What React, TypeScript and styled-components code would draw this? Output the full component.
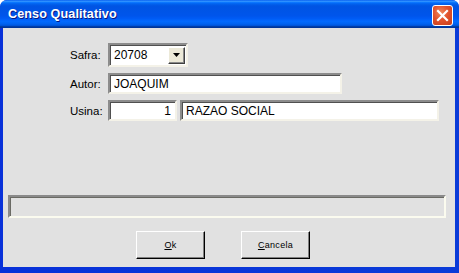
import React from 'react';
import styled, { createGlobalStyle } from 'styled-components';

const GlobalStyle = createGlobalStyle`
  html, body {
    margin: 0;
    padding: 0;
    background: #ffffff;
  }
  body {
    font-family: "Liberation Sans", Arial, sans-serif;
  }
`;

const Window = styled.div`
  width: 459px;
  height: 273px;
  display: flex;
  flex-direction: column;
  background: #0831d9;
  border-radius: 7px 7px 0 0;
  overflow: hidden;
`;

const TitleBar = styled.div`
  height: 28px;
  flex: none;
  display: flex;
  align-items: center;
  justify-content: space-between;
  padding: 0 6px 0 8px;
  background: linear-gradient(
    to bottom,
    #0058ee 0%,
    #3593ff 4%,
    #288eff 6%,
    #127dff 8%,
    #036ffc 10%,
    #0262ee 14%,
    #0057e5 20%,
    #0054e3 24%,
    #0055eb 56%,
    #005bf5 66%,
    #026afe 76%,
    #0062ef 86%,
    #0052d6 92%,
    #0040ab 94%,
    #003092 100%
  );
`;

const Title = styled.span`
  color: #ffffff;
  font-weight: bold;
  font-size: 12.6px;
  letter-spacing: 0.1px;
  text-shadow: 1px 1px #0a1883;
`;

const CloseButton = styled.div`
  width: 19px;
  height: 19px;
  margin-top: 3px;
  border: 1px solid #ffffff;
  border-radius: 3px;
  background: radial-gradient(circle at 40% 35%, #f08a5d 0%, #e2532d 45%, #c63c1a 100%);
  display: flex;
  align-items: center;
  justify-content: center;
`;

const Frame = styled.div`
  flex: 1;
  display: flex;
  padding: 0 4px 6px 3px;
  background: linear-gradient(to right, #0831d9 0%, #0a3bd8 100%);
`;

const Client = styled.div`
  flex: 1;
  display: flex;
  flex-direction: column;
  background: #e1e1e1;
  padding-top: 15px;
`;

const Form = styled.div`
  display: grid;
  grid-template-columns: 38px auto;
  row-gap: 6px;
  padding-left: 67px;
  align-items: center;
`;

const Label = styled.span`
  font-size: 11.5px;
  color: #000000;
`;

const Fields = styled.div`
  display: flex;
  gap: 3px;
`;

const Sunken = styled.div<{ w: number; h?: number; align?: string }>`
  box-sizing: border-box;
  width: ${p => p.w}px;
  height: ${p => p.h ?? 21}px;
  background: #ffffff;
  border-style: solid;
  border-width: 2px;
  border-color: #8c8c8c #f4f2e8 #f4f2e8 #8c8c8c;
  box-shadow: inset 1px 1px 0 #505050;
  display: flex;
  align-items: center;
  justify-content: ${p => (p.align === 'right' ? 'flex-end' : 'flex-start')};
  padding: 0 4px 0 4px;
  font-size: 12px;
  color: #000000;
`;

const Combo = styled(Sunken)`
  padding-right: 1px;
  justify-content: space-between;
`;

const DropButton = styled.div`
  box-sizing: border-box;
  width: 17px;
  height: 17px;
  background: #ece9d8;
  border-style: solid;
  border-width: 1px;
  border-color: #ffffff #404040 #404040 #ffffff;
  box-shadow: inset -1px -1px 0 #8a8a8a;
  display: flex;
  align-items: center;
  justify-content: center;
`;

const Spacer = styled.div`
  flex: 1;
`;

const StatusPanel = styled.div`
  box-sizing: border-box;
  height: 23px;
  margin: 0 9px 0 5px;
  border-style: solid;
  border-width: 2px;
  border-color: #8a8a8a #fbfbef #fbfbef #8a8a8a;
  box-shadow: inset 1px 1px 0 #6a6a64;
`;

const ButtonRow = styled.div`
  display: flex;
  gap: 36px;
  padding: 13px 0 8px 133px;
`;

const Button = styled.div`
  box-sizing: border-box;
  width: 69px;
  height: 28px;
  background: #e1e1e1;
  border-style: solid;
  border-width: 1px;
  border-color: #ffffff #000000 #000000 #ffffff;
  box-shadow: inset -1px -1px 0 #808080;
  display: flex;
  align-items: center;
  justify-content: center;
  font-size: 9px;
  color: #000000;
  letter-spacing: 0.3px;
`;

const Key = styled.span`
  text-decoration: underline;
`;

const App: React.FC = () => {
  return (
    <>
      <GlobalStyle />
      <Window>
        <TitleBar>
          <Title>Censo Qualitativo</Title>
          <CloseButton>
            <svg width="13" height="13" viewBox="0 0 13 13">
              <path d="M2 2 L11 11 M11 2 L2 11" stroke="#ffffff" strokeWidth="2.2" strokeLinecap="square" />
            </svg>
          </CloseButton>
        </TitleBar>
        <Frame>
          <Client>
            <Form>
              <Label>Safra:</Label>
              <Fields>
                <Combo w={80} h={24}>
                  20708
                  <DropButton>
                    <svg width="7" height="4" viewBox="0 0 7 4">
                      <path d="M0 0 H7 L3.5 4 Z" fill="#000000" />
                    </svg>
                  </DropButton>
                </Combo>
              </Fields>
              <Label>Autor:</Label>
              <Fields>
                <Sunken w={234}>JOAQUIM</Sunken>
              </Fields>
              <Label>Usina:</Label>
              <Fields>
                <Sunken w={69} align="right">1</Sunken>
                <Sunken w={259}>RAZAO SOCIAL</Sunken>
              </Fields>
            </Form>
            <Spacer />
            <StatusPanel />
            <ButtonRow>
              <Button>
                <span>
                  <Key>O</Key>k
                </span>
              </Button>
              <Button>
                <span>
                  <Key>C</Key>ancela
                </span>
              </Button>
            </ButtonRow>
          </Client>
        </Frame>
      </Window>
    </>
  );
};

export default App;
